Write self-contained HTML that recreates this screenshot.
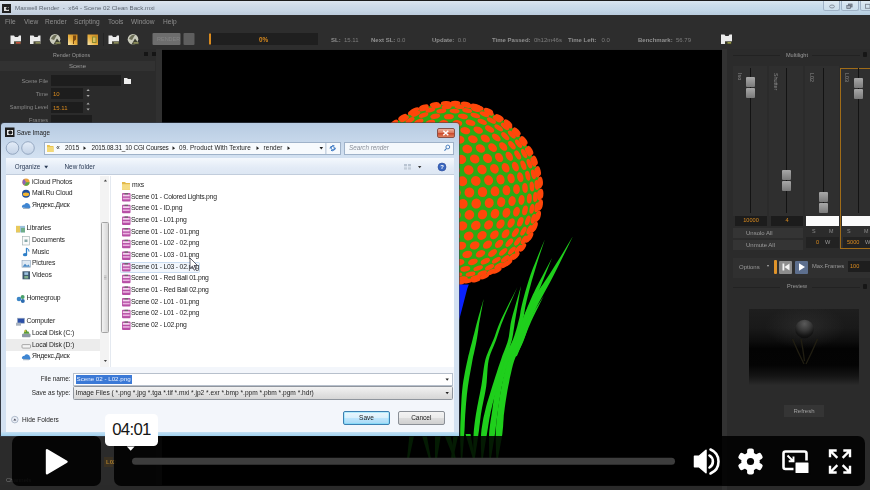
<!DOCTYPE html>
<html lang="en"><head><meta charset="utf-8"><title>Maxwell Render - Save Image</title>
<style>
html,body{margin:0;padding:0;background:#2b2b2b;}
body{width:870px;height:490px;position:relative;overflow:hidden;font-family:"Liberation Sans",sans-serif;font-size:6.5px;color:#9a9a9a;line-height:1;}
div,span{position:absolute;box-sizing:border-box;white-space:nowrap;}
svg{position:absolute;left:0;top:0;overflow:visible}
#frame{left:0;top:0;width:870px;height:490px;overflow:hidden;filter:blur(.45px)}
/* ---------- maxwell app ---------- */
#titlebar{left:0;top:0;width:870px;height:14.6px;background:linear-gradient(rgba(255,255,255,.35) 0,rgba(255,255,255,.12) 30%,rgba(255,255,255,0) 60%,rgba(90,110,140,.12) 100%),linear-gradient(90deg,#cdd8e5 0,#c9d8e7 45%,#c2d9ea 100%);border-top:1.4px solid #1b1b1b;}
#titlebar .t{left:15px;top:4.3px;font-size:6.2px;color:#5d6570;letter-spacing:0}
#menubar{left:0;top:15px;width:870px;height:15px;background:#2d2d2d;}
#menubar span{top:4px;color:#8f8f8f;font-size:6.6px}
#toolbar{left:0;top:30px;width:870px;height:19px;background:#2d2d2d;}
.stat{top:7px;font-size:6px;color:#7d7d7d}
.stat b{color:#8f8f8f;font-weight:bold}
#leftp{left:0;top:49px;width:162px;height:441px;background:#2b2b2b;}
#viewport{left:162px;top:49.6px;width:559.6px;height:441px;background:#000;}
#rightp{left:722px;top:49px;width:148px;height:441px;background:#2b2b2b;}
.lbl{color:#8a8a8a;font-size:5.6px;text-align:right}
.inp{background:#1d1d1d;height:11px}
.or{color:#d98a1e}
.kn{width:9px;height:10px;background:linear-gradient(#a8a8a8,#7a7a7a);border-radius:1px}
.rl{font-size:5.4px;color:#8a8a8a;transform-origin:0 0;transform:rotate(90deg)}
.ar{font-style:normal;font-size:5px;position:relative;top:-.5px}
.hd{font-size:5.6px;color:#9a9a9a;text-align:center}
/* ---------- dialog ---------- */
#dlg{left:1px;top:123px;width:458px;height:313px;background:linear-gradient(#b7cbe2 0,#c6d7ea 18px,#d3e1f1 34px,#d3e1f1 100%);border-radius:3px 3px 0 0;box-shadow:0 0 0 1px rgba(60,70,85,.55);color:#1e1e1e;font-size:6.6px}
#dlg .in{left:5px;top:34px;width:448px;height:275px;background:#fff}
.nav span,.files span{font-size:6.6px;color:#222}
.ico{width:8px;height:8px}
/* ---------- player ---------- */
#play{left:12.2px;top:435.8px;width:88.8px;height:50.4px;border-radius:7px;background:rgba(0,0,0,.87)}
#bar{left:113.6px;top:435.8px;width:751px;height:50.4px;border-radius:7px;background:rgba(0,0,0,.87)}
#tip{left:105.3px;top:414.2px;width:53px;height:31.4px;border-radius:4.5px;background:#fff;color:#161616;font-size:16.8px;text-align:center;line-height:31px;letter-spacing:-.7px;text-indent:-.7px}
</style></head><body>
<div id="frame">
<!-- app chrome -->
<div id="titlebar"><svg width="14" height="14" viewBox="0 0 14 14"><rect x="2" y="3" width="9" height="9" fill="#222"/><path d="M4 6h5v4h-5z" fill="#ddd"/><circle cx="7.5" cy="7.5" r="1.6" fill="#222"/></svg><span class="t">Maxwell Render&nbsp; -&nbsp; x64 - Scene 02 Clean Back.mxi</span>
<span style="left:823.400px;top:0;width:16.500px;height:10.200px;border:1px solid #9fb2c6;border-top:0;border-radius:0 0 2.500px 2.500px;background:rgba(255,255,255,.18)"></span>
<span style="left:840.600px;top:0;width:18.200px;height:10.200px;border:1px solid #9fb2c6;border-top:0;border-radius:0 0 2.500px 2.500px;background:rgba(255,255,255,.18)"></span>
<span style="left:859.600px;top:0;width:16px;height:10.200px;border:1px solid #9fb2c6;border-top:0;border-radius:0 0 2.500px 2.500px;background:rgba(255,255,255,.18)"></span>
<svg width="870" height="15"><ellipse cx="832" cy="5.500" rx="2.400" ry="1.500" fill="none" stroke="#7d8794" stroke-width=".9"/><rect x="848.500" y="3" width="3.600" height="3" fill="#8a929c" stroke="#606a78" stroke-width=".7"/><rect x="846.800" y="4.600" width="3.600" height="3" fill="#aab4c0" stroke="#606a78" stroke-width=".7"/><rect x="865.500" y="3.300" width="4.500" height="4" fill="none" stroke="#7d8794" stroke-width=".9"/></svg>
</div>
<div id="menubar"><span style="left:5px">File</span><span style="left:24px">View</span><span style="left:45px">Render</span><span style="left:74px">Scripting</span><span style="left:108px">Tools</span><span style="left:131px">Window</span><span style="left:163px">Help</span></div>
<div id="toolbar">
<svg width="870" height="19">
<g id="ticons"><defs><linearGradient id="og" x1="0" y1="0" x2="1" y2="1"><stop offset="0" stop-color="#c8821c"/><stop offset=".55" stop-color="#e8b040"/><stop offset="1" stop-color="#f4dc98"/></linearGradient><linearGradient id="og2" x1="1" y1="0" x2="0" y2="1"><stop offset="0" stop-color="#c8821c"/><stop offset=".55" stop-color="#e8b040"/><stop offset="1" stop-color="#f6e6b0"/></linearGradient></defs><path d="M10.5 5.500h3.500l1 1.500h3l1 -1.500h2v8.500h-10.500z" fill="#ececec"/><rect x="14.0" y="11.300" width="7" height="2.900" fill="#4a4a3a"/><rect x="16.0" y="12" width="4.500" height="1.600" fill="#c5503a"/><path d="M30 5.500h3.500l1 1.500h3l1 -1.500h2v8.500h-10.500z" fill="#ececec"/><rect x="33.5" y="11.300" width="7" height="2.900" fill="#4a4a3a"/><rect x="35.5" y="12" width="4.500" height="1.600" fill="#8a8c5a"/><circle cx="55.0" cy="9.300" r="5.300" fill="#c9cabb"/><path d="M51.0 9a5 5 0 0 1 6 -4l-3 5z" fill="#6e7058"/><path d="M53.5 14.500l3.500 -6l4.500 6z" fill="#3d3f30"/><rect x="55.5" y="12" width="5" height="1.800" fill="#8a8c5a"/><rect x="68" y="4.500" width="9.500" height="10.500" fill="url(#og2)"/><path d="M73 5.500h3v4l-2 1.500v3h-1z" fill="#7a4a10"/><rect x="87.500" y="4.500" width="10.500" height="10.500" fill="url(#og2)"/><path d="M92 6.500h4.500v6.500h-4.500z" fill="#8a8a30"/><path d="M93 7.500h2.500v4.500h-2.500z" fill="#d8c060"/><path d="M108.5 5.500h3.500l1 1.500h3l1 -1.500h2v8.500h-10.500z" fill="#ececec"/><rect x="112.0" y="11.300" width="7" height="2.900" fill="#4a4a3a"/><rect x="114.0" y="12" width="4.500" height="1.600" fill="#8a8c5a"/><circle cx="133.0" cy="9.300" r="5.300" fill="#c9cabb"/><path d="M129.0 9a5 5 0 0 1 6 -4l-3 5z" fill="#6e7058"/><path d="M131.5 14.500l3.500 -6l4.500 6z" fill="#3d3f30"/><rect x="133.5" y="12" width="5" height="1.800" fill="#8a8c5a"/></g>
<rect x="103" y="3" width=".7" height="13" fill="#222"/>
<rect x="152.500" y="3" width="28" height="12" rx="1" fill="#6d6d6d"/>
<rect x="183.500" y="3" width="11" height="12" rx="1" fill="#5e5e5e"/>
<rect x="209" y="3" width="109" height="12" fill="#1f1f1f"/>
<rect x="209" y="3.500" width="2" height="11" fill="#d98a1e"/>
<path d="M721 4.500h3.500l1 1.500h3l1 -1.500h2.500v9.500h-11z" fill="#ececec"/><rect x="725" y="11.300" width="7" height="2.900" fill="#3a3a2a"/><rect x="727.5" y="12" width="3.500" height="1.600" fill="#9a9c4a"/>
</svg>
<span style="left:157px;top:7px;font-size:5.5px;color:#858585">RENDER</span>
<span style="left:209px;top:7px;width:109px;text-align:center;font-size:6.4px;color:#d98a1e;font-weight:bold">0%</span>
<span class="stat" style="left:331px"><b>SL:</b>&nbsp; 15.11</span>
<span class="stat" style="left:371px"><b>Next SL:</b> 0.0</span>
<span class="stat" style="left:432px"><b>Update:</b>&nbsp; 0.0</span>
<span class="stat" style="left:492px"><b>Time Passed:</b>&nbsp; 0h12m46s</span>
<span class="stat" style="left:568px"><b>Time Left:</b>&nbsp;&nbsp; 0.0</span>
<span class="stat" style="left:638px"><b>Benchmark:</b>&nbsp; 56.79</span>
</div>
<!-- left panel -->
<div id="leftp">
<span class="hd" style="left:0;top:4px;width:143px;font-size:5.3px">Render Options</span>
<span style="left:144px;top:3px;width:4px;height:4px;background:#151515"></span><span style="left:152px;top:3px;width:4px;height:4px;background:#151515"></span>
<span style="left:0;top:11.500px;width:155px;height:10.500px;background:#323232"></span><span style="left:155.500px;top:0;width:6px;height:441px;background:#303030"></span>
<span class="hd" style="left:0;top:14px;width:155px;font-size:6px">Scene</span>
<span class="lbl" style="left:0;top:29.700px;width:48px">Scene File</span><span class="inp" style="left:51px;top:26px;width:70px"></span>
<svg width="161" height="80"><path d="M124 29h3l1 1h3v5h-7z" fill="#eee"/><path d="M86.500 42l1.600 -2 1.600 2zM86.500 46l1.600 2 1.600 -2zM86.500 55.500l1.600 -2 1.600 2zM86.500 59.500l1.600 2 1.600 -2z" fill="#aaa"/></svg>
<span class="lbl" style="left:0;top:42.800px;width:48px">Time</span><span class="inp" style="left:51px;top:39px;width:32px"></span><span class="or" style="left:53px;top:42px;font-size:6px">10</span>
<span class="lbl" style="left:0;top:56.300px;width:48px">Sampling Level</span><span class="inp" style="left:51px;top:52.500px;width:32px"></span><span class="or" style="left:53px;top:55.500px;font-size:6px">15.11</span>
<span class="lbl" style="left:0;top:68.800px;width:48px">Frames</span><span class="inp" style="left:51px;top:66px;width:41px"></span>
<!-- bits visible under the player -->
<span style="left:6px;top:428px;font-size:6px;color:#777">Channels</span>
<span style="left:104px;top:408px;width:9px;height:10px;background:#3a3122"></span><span style="left:106px;top:410px;font-size:6px;font-weight:bold;color:#a87a2a">L02</span>
</div>
<!-- viewport -->
<div id="viewport"></div><div style="left:0;top:484.500px;width:870px;height:6px;background:#2a2a2a"></div>
<svg id="scene" width="870" height="490" viewBox="0 0 870 490">
<circle cx="451" cy="193" r="89.5" fill="#2caa14"/>
<g fill="#ff470a"><ellipse cx="540.6" cy="204.1" rx="2.3" ry="5.0" transform="rotate(7 540.6 204.1)"/><ellipse cx="475.6" cy="106.2" rx="2.3" ry="5.0" transform="rotate(-74 475.6 106.2)"/><ellipse cx="414.7" cy="110.4" rx="2.3" ry="5.0" transform="rotate(-114 414.7 110.4)"/><ellipse cx="508.2" cy="262.8" rx="2.3" ry="5.0" transform="rotate(51 508.2 262.8)"/><ellipse cx="530.1" cy="236.6" rx="2.3" ry="5.0" transform="rotate(29 530.1 236.6)"/><ellipse cx="534.9" cy="226.4" rx="2.3" ry="5.0" transform="rotate(22 534.9 226.4)"/><ellipse cx="538.4" cy="215.6" rx="2.3" ry="5.0" transform="rotate(14 538.4 215.6)"/><ellipse cx="540.6" cy="181.6" rx="2.3" ry="5.0" transform="rotate(-7 540.6 181.6)"/><ellipse cx="508.1" cy="123.0" rx="2.3" ry="5.0" transform="rotate(-51 508.1 123.0)"/><ellipse cx="488.5" cy="110.9" rx="2.3" ry="5.0" transform="rotate(-65 488.5 110.9)"/><ellipse cx="393.8" cy="123.2" rx="2.3" ry="5.0" transform="rotate(-129 393.8 123.2)"/><ellipse cx="475.8" cy="279.8" rx="2.3" ry="5.0" transform="rotate(74 475.8 279.8)"/><ellipse cx="465.7" cy="103.9" rx="2.3" ry="5.0" transform="rotate(-81 465.7 103.9)"/><ellipse cx="459.4" cy="282.8" rx="2.3" ry="5.0" transform="rotate(85 459.4 282.8)"/><ellipse cx="423.8" cy="107.0" rx="2.3" ry="5.0" transform="rotate(-108 423.8 107.0)"/><ellipse cx="515.7" cy="255.8" rx="2.3" ry="5.0" transform="rotate(44 515.7 255.8)"/><ellipse cx="497.2" cy="270.4" rx="2.3" ry="5.0" transform="rotate(59 497.2 270.4)"/><ellipse cx="538.4" cy="171.0" rx="2.3" ry="5.0" transform="rotate(-14 538.4 171.0)"/><ellipse cx="541.1" cy="193.7" rx="2.3" ry="5.0" transform="rotate(0 541.1 193.7)"/><ellipse cx="516.8" cy="131.4" rx="2.3" ry="5.0" transform="rotate(-43 516.8 131.4)"/><ellipse cx="434.7" cy="104.4" rx="2.3" ry="5.0" transform="rotate(-100 434.7 104.4)"/><ellipse cx="534.9" cy="160.4" rx="2.3" ry="5.0" transform="rotate(-21 534.9 160.4)"/><ellipse cx="524.0" cy="140.4" rx="2.3" ry="5.0" transform="rotate(-36 524.0 140.4)"/><ellipse cx="455.5" cy="103.1" rx="2.3" ry="5.0" transform="rotate(-87 455.5 103.1)"/><ellipse cx="522.6" cy="247.5" rx="2.3" ry="5.0" transform="rotate(37 522.6 247.5)"/><ellipse cx="402.6" cy="117.3" rx="2.3" ry="5.0" transform="rotate(-123 402.6 117.3)"/><ellipse cx="530.1" cy="150.3" rx="2.3" ry="5.0" transform="rotate(-28 530.1 150.3)"/><ellipse cx="445.8" cy="103.3" rx="2.3" ry="5.0" transform="rotate(-93 445.8 103.3)"/><ellipse cx="484.4" cy="276.4" rx="2.3" ry="5.0" transform="rotate(68 484.4 276.4)"/><ellipse cx="499.4" cy="117.4" rx="2.3" ry="5.0" transform="rotate(-57 499.4 117.4)"/><ellipse cx="478.9" cy="107.7" rx="2.3" ry="5.0" transform="rotate(-72 478.9 107.7)"/><ellipse cx="539.7" cy="205.7" rx="2.3" ry="5.0" transform="rotate(8 539.7 205.7)"/><ellipse cx="505.0" cy="264.5" rx="2.3" ry="5.0" transform="rotate(53 505.0 264.5)"/><ellipse cx="412.6" cy="112.1" rx="2.3" ry="5.0" transform="rotate(-115 412.6 112.1)"/><ellipse cx="528.2" cy="238.3" rx="2.3" ry="5.0" transform="rotate(30 528.2 238.3)"/><ellipse cx="467.1" cy="281.0" rx="2.3" ry="5.0" transform="rotate(80 467.1 281.0)"/><ellipse cx="533.3" cy="228.0" rx="2.3" ry="5.0" transform="rotate(23 533.3 228.0)"/><ellipse cx="537.0" cy="217.2" rx="2.3" ry="5.0" transform="rotate(16 537.0 217.2)"/><ellipse cx="539.7" cy="183.3" rx="2.3" ry="5.0" transform="rotate(-6 539.7 183.3)"/><ellipse cx="508.2" cy="124.7" rx="2.3" ry="5.0" transform="rotate(-50 508.2 124.7)"/><ellipse cx="467.3" cy="105.5" rx="2.3" ry="5.0" transform="rotate(-79 467.3 105.5)"/><ellipse cx="489.0" cy="112.6" rx="2.3" ry="5.0" transform="rotate(-65 489.0 112.6)"/><ellipse cx="393.9" cy="124.9" rx="2.3" ry="5.0" transform="rotate(-130 393.9 124.9)"/><ellipse cx="451.7" cy="104.2" rx="2.3" ry="5.0" transform="rotate(-90 451.7 104.2)"/><ellipse cx="454.6" cy="281.6" rx="2.3" ry="5.0" transform="rotate(88 454.6 281.6)"/><ellipse cx="491.4" cy="271.9" rx="2.3" ry="5.0" transform="rotate(63 491.4 271.9)"/><ellipse cx="424.0" cy="108.6" rx="2.3" ry="5.0" transform="rotate(-108 424.0 108.6)"/><ellipse cx="511.8" cy="257.4" rx="2.3" ry="5.0" transform="rotate(47 511.8 257.4)"/><ellipse cx="537.0" cy="172.7" rx="2.3" ry="5.0" transform="rotate(-13 537.0 172.7)"/><ellipse cx="539.2" cy="195.3" rx="2.3" ry="5.0" transform="rotate(2 539.2 195.3)"/><ellipse cx="436.3" cy="106.0" rx="2.3" ry="5.0" transform="rotate(-100 436.3 106.0)"/><ellipse cx="515.7" cy="133.1" rx="2.3" ry="5.0" transform="rotate(-43 515.7 133.1)"/><ellipse cx="475.3" cy="277.7" rx="2.3" ry="5.0" transform="rotate(74 475.3 277.7)"/><ellipse cx="533.3" cy="162.0" rx="2.3" ry="5.0" transform="rotate(-21 533.3 162.0)"/><ellipse cx="522.6" cy="142.1" rx="2.3" ry="5.0" transform="rotate(-35 522.6 142.1)"/><ellipse cx="518.5" cy="249.1" rx="2.3" ry="5.0" transform="rotate(40 518.5 249.1)"/><ellipse cx="404.4" cy="118.9" rx="2.3" ry="5.0" transform="rotate(-122 404.4 118.9)"/><ellipse cx="528.2" cy="151.9" rx="2.3" ry="5.0" transform="rotate(-28 528.2 151.9)"/><ellipse cx="475.8" cy="109.3" rx="2.3" ry="5.0" transform="rotate(-73 475.8 109.3)"/><ellipse cx="497.2" cy="119.1" rx="2.3" ry="5.0" transform="rotate(-58 497.2 119.1)"/><ellipse cx="498.7" cy="266.0" rx="2.3" ry="5.0" transform="rotate(57 498.7 266.0)"/><ellipse cx="536.8" cy="207.4" rx="2.3" ry="5.0" transform="rotate(10 536.8 207.4)"/><ellipse cx="524.1" cy="239.9" rx="2.3" ry="5.0" transform="rotate(33 524.1 239.9)"/><ellipse cx="415.7" cy="113.8" rx="2.3" ry="5.0" transform="rotate(-114 415.7 113.8)"/><ellipse cx="459.4" cy="106.7" rx="2.3" ry="5.0" transform="rotate(-84 459.4 106.7)"/><ellipse cx="529.4" cy="229.7" rx="2.3" ry="5.0" transform="rotate(25 529.4 229.7)"/><ellipse cx="533.4" cy="218.9" rx="2.3" ry="5.0" transform="rotate(17 533.4 218.9)"/><ellipse cx="462.9" cy="278.6" rx="2.3" ry="5.0" transform="rotate(82 462.9 278.6)"/><ellipse cx="536.8" cy="184.9" rx="2.3" ry="5.0" transform="rotate(-5 536.8 184.9)"/><ellipse cx="446.6" cy="107.0" rx="2.3" ry="5.0" transform="rotate(-93 446.6 107.0)"/><ellipse cx="482.2" cy="273.2" rx="2.3" ry="5.0" transform="rotate(69 482.2 273.2)"/><ellipse cx="505.0" cy="126.4" rx="2.3" ry="5.0" transform="rotate(-51 505.0 126.4)"/><ellipse cx="484.4" cy="114.2" rx="2.3" ry="5.0" transform="rotate(-67 484.4 114.2)"/><ellipse cx="430.3" cy="110.0" rx="2.3" ry="5.0" transform="rotate(-104 430.3 110.0)"/><ellipse cx="397.4" cy="126.5" rx="2.3" ry="5.0" transform="rotate(-129 397.4 126.5)"/><ellipse cx="505.2" cy="258.9" rx="2.3" ry="5.0" transform="rotate(51 505.2 258.9)"/><ellipse cx="533.4" cy="174.3" rx="2.3" ry="5.0" transform="rotate(-13 533.4 174.3)"/><ellipse cx="535.3" cy="197.0" rx="2.3" ry="5.0" transform="rotate(3 535.3 197.0)"/><ellipse cx="511.8" cy="134.7" rx="2.3" ry="5.0" transform="rotate(-44 511.8 134.7)"/><ellipse cx="467.1" cy="110.5" rx="2.3" ry="5.0" transform="rotate(-79 467.1 110.5)"/><ellipse cx="511.9" cy="250.6" rx="2.3" ry="5.0" transform="rotate(43 511.9 250.6)"/><ellipse cx="529.4" cy="163.7" rx="2.3" ry="5.0" transform="rotate(-21 529.4 163.7)"/><ellipse cx="489.6" cy="267.3" rx="2.3" ry="5.0" transform="rotate(63 489.6 267.3)"/><ellipse cx="518.5" cy="143.7" rx="2.3" ry="5.0" transform="rotate(-36 518.5 143.7)"/><ellipse cx="470.5" cy="274.1" rx="2.3" ry="5.0" transform="rotate(76 470.5 274.1)"/><ellipse cx="410.0" cy="120.4" rx="2.3" ry="5.0" transform="rotate(-119 410.0 120.4)"/><ellipse cx="524.1" cy="153.5" rx="2.3" ry="5.0" transform="rotate(-28 524.1 153.5)"/><ellipse cx="491.4" cy="120.6" rx="2.3" ry="5.0" transform="rotate(-61 491.4 120.6)"/><ellipse cx="441.3" cy="111.0" rx="2.3" ry="5.0" transform="rotate(-97 441.3 111.0)"/><ellipse cx="423.6" cy="115.2" rx="2.3" ry="5.0" transform="rotate(-109 423.6 115.2)"/><ellipse cx="531.9" cy="208.9" rx="2.3" ry="5.0" transform="rotate(11 531.9 208.9)"/><ellipse cx="517.7" cy="241.4" rx="2.3" ry="5.0" transform="rotate(36 517.7 241.4)"/><ellipse cx="454.6" cy="111.1" rx="2.3" ry="5.0" transform="rotate(-87 454.6 111.1)"/><ellipse cx="523.4" cy="231.2" rx="2.3" ry="5.0" transform="rotate(28 523.4 231.2)"/><ellipse cx="457.3" cy="274.5" rx="2.3" ry="5.0" transform="rotate(86 457.3 274.5)"/><ellipse cx="527.8" cy="220.4" rx="2.3" ry="5.0" transform="rotate(20 527.8 220.4)"/><ellipse cx="475.3" cy="115.5" rx="2.3" ry="5.0" transform="rotate(-73 475.3 115.5)"/><ellipse cx="531.9" cy="186.5" rx="2.3" ry="5.0" transform="rotate(-5 531.9 186.5)"/><ellipse cx="496.3" cy="260.2" rx="2.3" ry="5.0" transform="rotate(56 496.3 260.2)"/><ellipse cx="498.7" cy="127.9" rx="2.3" ry="5.0" transform="rotate(-54 498.7 127.9)"/><ellipse cx="403.9" cy="128.0" rx="2.3" ry="5.0" transform="rotate(-126 403.9 128.0)"/><ellipse cx="478.2" cy="268.2" rx="2.3" ry="5.0" transform="rotate(70 478.2 268.2)"/><ellipse cx="527.8" cy="175.8" rx="2.4" ry="5.0" transform="rotate(-13 527.8 175.8)"/><ellipse cx="503.2" cy="251.9" rx="2.4" ry="5.0" transform="rotate(48 503.2 251.9)"/><ellipse cx="505.2" cy="136.2" rx="2.5" ry="5.0" transform="rotate(-46 505.2 136.2)"/><ellipse cx="529.3" cy="198.5" rx="2.5" ry="5.0" transform="rotate(4 529.3 198.5)"/><ellipse cx="435.2" cy="116.2" rx="2.5" ry="5.0" transform="rotate(-102 435.2 116.2)"/><ellipse cx="418.8" cy="121.7" rx="2.5" ry="5.0" transform="rotate(-114 418.8 121.7)"/><ellipse cx="482.2" cy="121.8" rx="2.5" ry="5.0" transform="rotate(-66 482.2 121.8)"/><ellipse cx="462.9" cy="116.4" rx="2.6" ry="5.0" transform="rotate(-81 462.9 116.4)"/><ellipse cx="523.4" cy="165.2" rx="2.6" ry="5.0" transform="rotate(-21 523.4 165.2)"/><ellipse cx="511.9" cy="145.2" rx="2.6" ry="5.0" transform="rotate(-38 511.9 145.2)"/><ellipse cx="465.3" cy="268.9" rx="2.6" ry="5.0" transform="rotate(79 465.3 268.9)"/><ellipse cx="517.7" cy="155.0" rx="2.6" ry="5.0" transform="rotate(-30 517.7 155.0)"/><ellipse cx="509.3" cy="242.7" rx="2.6" ry="5.0" transform="rotate(40 509.3 242.7)"/><ellipse cx="448.9" cy="116.6" rx="2.7" ry="5.0" transform="rotate(-92 448.9 116.6)"/><ellipse cx="485.3" cy="261.2" rx="2.7" ry="5.0" transform="rotate(63 485.3 261.2)"/><ellipse cx="525.0" cy="210.4" rx="2.7" ry="5.0" transform="rotate(13 525.0 210.4)"/><ellipse cx="515.4" cy="232.6" rx="2.7" ry="5.0" transform="rotate(32 515.4 232.6)"/><ellipse cx="520.3" cy="221.8" rx="2.8" ry="5.0" transform="rotate(23 520.3 221.8)"/><ellipse cx="489.6" cy="129.1" rx="2.8" ry="5.0" transform="rotate(-59 489.6 129.1)"/><ellipse cx="525.0" cy="187.9" rx="2.8" ry="5.0" transform="rotate(-4 525.0 187.9)"/><ellipse cx="413.2" cy="129.2" rx="2.9" ry="5.0" transform="rotate(-121 413.2 129.2)"/><ellipse cx="430.3" cy="122.7" rx="2.9" ry="5.0" transform="rotate(-106 430.3 122.7)"/><ellipse cx="492.6" cy="253.0" rx="2.9" ry="5.0" transform="rotate(55 492.6 253.0)"/><ellipse cx="470.5" cy="122.7" rx="2.9" ry="5.0" transform="rotate(-74 470.5 122.7)"/><ellipse cx="472.9" cy="261.9" rx="3.0" ry="5.0" transform="rotate(72 472.9 261.9)"/><ellipse cx="496.3" cy="137.5" rx="3.0" ry="5.0" transform="rotate(-51 496.3 137.5)"/><ellipse cx="520.3" cy="177.2" rx="3.1" ry="5.0" transform="rotate(-13 520.3 177.2)"/><ellipse cx="521.5" cy="199.9" rx="3.1" ry="5.0" transform="rotate(6 521.5 199.9)"/><ellipse cx="443.5" cy="123.2" rx="3.1" ry="5.0" transform="rotate(-96 443.5 123.2)"/><ellipse cx="457.3" cy="123.2" rx="3.2" ry="5.0" transform="rotate(-85 457.3 123.2)"/><ellipse cx="499.1" cy="243.8" rx="3.2" ry="5.0" transform="rotate(47 499.1 243.8)"/><ellipse cx="503.2" cy="146.5" rx="3.2" ry="5.0" transform="rotate(-42 503.2 146.5)"/><ellipse cx="459.5" cy="262.3" rx="3.2" ry="5.0" transform="rotate(83 459.5 262.3)"/><ellipse cx="515.4" cy="166.6" rx="3.2" ry="5.0" transform="rotate(-22 515.4 166.6)"/><ellipse cx="509.3" cy="156.3" rx="3.2" ry="5.0" transform="rotate(-32 509.3 156.3)"/><ellipse cx="478.2" cy="130.1" rx="3.3" ry="5.0" transform="rotate(-67 478.2 130.1)"/><ellipse cx="505.6" cy="233.8" rx="3.3" ry="5.0" transform="rotate(37 505.6 233.8)"/><ellipse cx="516.5" cy="211.7" rx="3.3" ry="5.0" transform="rotate(16 516.5 211.7)"/><ellipse cx="480.5" cy="253.8" rx="3.3" ry="5.0" transform="rotate(64 480.5 253.8)"/><ellipse cx="511.1" cy="223.0" rx="3.3" ry="5.0" transform="rotate(27 511.1 223.0)"/><ellipse cx="516.5" cy="189.2" rx="3.4" ry="5.0" transform="rotate(-3 516.5 189.2)"/><ellipse cx="485.3" cy="138.5" rx="3.5" ry="5.0" transform="rotate(-58 485.3 138.5)"/><ellipse cx="465.3" cy="130.7" rx="3.5" ry="5.0" transform="rotate(-77 465.3 130.7)"/><ellipse cx="467.3" cy="254.4" rx="3.6" ry="5.0" transform="rotate(75 467.3 254.4)"/><ellipse cx="487.5" cy="244.7" rx="3.6" ry="5.0" transform="rotate(55 487.5 244.7)"/><ellipse cx="511.1" cy="178.4" rx="3.6" ry="5.0" transform="rotate(-14 511.1 178.4)"/><ellipse cx="453.5" cy="254.6" rx="3.7" ry="5.0" transform="rotate(88 453.5 254.6)"/><ellipse cx="512.1" cy="201.1" rx="3.7" ry="5.0" transform="rotate(8 512.1 201.1)"/><ellipse cx="492.6" cy="147.6" rx="3.7" ry="5.0" transform="rotate(-47 492.6 147.6)"/><ellipse cx="494.4" cy="234.8" rx="3.7" ry="5.0" transform="rotate(44 494.4 234.8)"/><ellipse cx="505.6" cy="167.8" rx="3.7" ry="5.0" transform="rotate(-25 505.6 167.8)"/><ellipse cx="499.1" cy="157.5" rx="3.7" ry="5.0" transform="rotate(-36 499.1 157.5)"/><ellipse cx="506.4" cy="212.8" rx="3.8" ry="5.0" transform="rotate(20 506.4 212.8)"/><ellipse cx="500.5" cy="224.1" rx="3.8" ry="5.0" transform="rotate(32 500.5 224.1)"/><ellipse cx="472.9" cy="139.2" rx="3.8" ry="5.0" transform="rotate(-68 472.9 139.2)"/><ellipse cx="474.7" cy="245.4" rx="3.9" ry="5.0" transform="rotate(66 474.7 245.4)"/><ellipse cx="506.4" cy="190.3" rx="3.9" ry="5.0" transform="rotate(-3 506.4 190.3)"/><ellipse cx="459.5" cy="139.6" rx="4.0" ry="5.0" transform="rotate(-81 459.5 139.6)"/><ellipse cx="461.3" cy="245.7" rx="4.0" ry="5.0" transform="rotate(79 461.3 245.7)"/><ellipse cx="480.5" cy="148.5" rx="4.0" ry="5.0" transform="rotate(-56 480.5 148.5)"/><ellipse cx="482.0" cy="235.5" rx="4.1" ry="5.0" transform="rotate(54 482.0 235.5)"/><ellipse cx="500.5" cy="179.5" rx="4.1" ry="5.0" transform="rotate(-15 500.5 179.5)"/><ellipse cx="501.2" cy="202.1" rx="4.1" ry="5.0" transform="rotate(10 501.2 202.1)"/><ellipse cx="487.5" cy="158.4" rx="4.2" ry="5.0" transform="rotate(-44 487.5 158.4)"/><ellipse cx="494.4" cy="168.8" rx="4.2" ry="5.0" transform="rotate(-29 494.4 168.8)"/><ellipse cx="488.6" cy="224.9" rx="4.2" ry="5.0" transform="rotate(40 488.6 224.9)"/><ellipse cx="495.0" cy="213.7" rx="4.2" ry="5.0" transform="rotate(25 495.0 213.7)"/><ellipse cx="467.3" cy="149.0" rx="4.3" ry="5.0" transform="rotate(-70 467.3 149.0)"/><ellipse cx="468.7" cy="236.0" rx="4.3" ry="5.0" transform="rotate(68 468.7 236.0)"/><ellipse cx="495.0" cy="191.3" rx="4.4" ry="5.0" transform="rotate(-2 495.0 191.3)"/><ellipse cx="453.5" cy="149.2" rx="4.4" ry="5.0" transform="rotate(-87 453.5 149.2)"/><ellipse cx="455.0" cy="236.2" rx="4.4" ry="5.0" transform="rotate(85 455.0 236.2)"/><ellipse cx="474.7" cy="159.0" rx="4.4" ry="5.0" transform="rotate(-55 474.7 159.0)"/><ellipse cx="475.8" cy="225.5" rx="4.5" ry="5.0" transform="rotate(53 475.8 225.5)"/><ellipse cx="488.6" cy="180.3" rx="4.5" ry="5.0" transform="rotate(-19 488.6 180.3)"/><ellipse cx="489.2" cy="203.0" rx="4.5" ry="5.0" transform="rotate(15 489.2 203.0)"/><ellipse cx="482.0" cy="169.5" rx="4.5" ry="5.0" transform="rotate(-37 482.0 169.5)"/><ellipse cx="482.5" cy="214.5" rx="4.5" ry="5.0" transform="rotate(34 482.5 214.5)"/><ellipse cx="461.3" cy="159.4" rx="4.6" ry="5.0" transform="rotate(-73 461.3 159.4)"/><ellipse cx="462.3" cy="225.9" rx="4.6" ry="5.0" transform="rotate(71 462.3 225.9)"/><ellipse cx="482.5" cy="192.0" rx="4.7" ry="5.0" transform="rotate(-2 482.5 192.0)"/><ellipse cx="468.7" cy="170.0" rx="4.7" ry="5.0" transform="rotate(-52 468.7 170.0)"/><ellipse cx="469.4" cy="214.9" rx="4.7" ry="5.0" transform="rotate(50 469.4 214.9)"/><ellipse cx="475.8" cy="180.9" rx="4.8" ry="5.0" transform="rotate(-26 475.8 180.9)"/><ellipse cx="476.2" cy="203.6" rx="4.8" ry="5.0" transform="rotate(23 476.2 203.6)"/><ellipse cx="455.0" cy="170.2" rx="4.8" ry="5.0" transform="rotate(-80 455.0 170.2)"/><ellipse cx="455.8" cy="215.1" rx="4.8" ry="5.0" transform="rotate(78 455.8 215.1)"/><ellipse cx="469.4" cy="192.5" rx="4.9" ry="5.0" transform="rotate(-2 469.4 192.5)"/><ellipse cx="462.3" cy="181.3" rx="4.9" ry="5.0" transform="rotate(-46 462.3 181.3)"/><ellipse cx="462.7" cy="203.9" rx="4.9" ry="5.0" transform="rotate(43 462.7 203.9)"/><ellipse cx="455.8" cy="192.7" rx="5.0" ry="5.0" transform="rotate(-4 455.8 192.7)"/></g>
<path d="M458 284.500h10.800l-1.500 4l-8.300 32h-1z" fill="#0a22ff"/>
<g fill="#1fcf1c">
<path d="M572.9 236.3L570.3 240.5L566.7 246.4L562.5 253.4L558.0 260.7L553.6 267.8L549.7 274.0L546.2 279.3L542.7 284.5L539.3 289.3L536.2 293.9L533.3 298.2L530.8 302.2L528.8 305.6L527.3 308.4L526.1 311.0L525.1 313.4L524.1 315.9L523.0 318.7L521.9 321.9L520.8 325.3L519.8 328.7L518.8 332.1L517.7 335.4L516.6 338.7L515.3 341.8L513.9 344.9L512.3 348.1L510.8 351.5L509.3 355.1L507.9 359.0L506.7 363.1L505.5 367.5L504.5 372.0L503.5 376.5L502.6 381.0L501.8 385.4L501.0 389.7L500.2 393.9L499.5 398.2L498.9 402.4L498.3 406.5L497.7 410.6L497.3 414.6L496.8 418.4L496.4 422.2L496.1 425.9L495.9 429.8L495.7 433.7L495.7 438.2L495.8 443.2L495.9 448.3L496.1 453.0L496.3 457.1L496.4 460.0L497.6 460.0L498.2 457.2L498.9 453.3L499.8 448.6L500.7 443.6L501.6 438.7L502.3 434.3L502.7 430.3L503.1 426.4L503.3 422.7L503.6 419.0L503.8 415.3L504.3 411.4L504.8 407.4L505.4 403.3L506.0 399.2L506.7 395.0L507.4 390.8L508.2 386.6L509.1 382.3L509.9 377.8L510.9 373.4L511.9 369.0L512.9 364.9L514.1 361.0L515.4 357.6L517.0 354.3L518.6 351.2L520.3 348.0L521.9 344.8L523.4 341.3L524.7 337.8L525.9 334.3L526.9 330.8L527.9 327.5L528.9 324.3L530.0 321.3L531.0 318.6L532.0 316.3L533.0 314.1L534.1 311.9L535.5 309.2L537.2 305.8L539.3 301.8L541.7 297.4L544.4 292.5L547.3 287.3L550.3 281.8L553.3 276.0L556.6 269.5L560.3 262.0L564.1 254.3L567.7 247.0L570.7 240.7L572.9 236.3z"/>
<path d="M544.8 239.4L543.2 243.3L540.9 248.7L538.3 255.1L535.5 262.0L532.8 268.6L530.6 274.6L528.8 279.9L527.2 285.2L525.7 290.3L524.4 295.1L523.2 299.6L522.2 303.6L521.4 307.0L520.8 309.8L520.4 312.3L520.1 314.5L519.6 316.9L519.0 319.5L518.2 322.6L517.4 325.8L516.4 329.2L515.4 332.6L514.3 336.0L513.1 339.3L511.7 342.4L510.2 345.5L508.6 348.6L506.9 351.9L505.2 355.4L503.7 359.2L502.3 363.2L500.9 367.5L499.6 372.0L498.4 376.5L497.2 381.0L496.2 385.4L495.3 389.7L494.5 394.0L493.9 398.3L493.3 402.4L492.7 406.6L492.2 410.6L491.6 414.5L491.0 418.3L490.4 422.0L489.9 425.8L489.4 429.7L489.1 433.7L489.0 438.2L489.0 443.2L489.1 448.3L489.2 453.1L489.3 457.1L489.4 460.0L490.6 460.0L491.1 457.2L491.8 453.2L492.6 448.6L493.4 443.6L494.2 438.7L494.9 434.3L495.4 430.4L495.9 426.6L496.4 422.8L496.8 419.1L497.3 415.3L497.8 411.4L498.4 407.4L499.0 403.3L499.6 399.1L500.3 395.0L501.0 390.8L501.8 386.6L502.7 382.3L503.7 377.8L504.8 373.4L505.9 369.0L507.1 364.8L508.3 360.8L509.6 357.2L511.1 353.9L512.6 350.6L514.1 347.4L515.6 344.1L516.9 340.7L518.1 337.3L519.3 333.8L520.3 330.3L521.3 326.9L522.2 323.6L523.0 320.5L523.6 317.7L524.0 315.2L524.3 312.9L524.7 310.5L525.1 307.8L525.8 304.4L526.7 300.4L527.8 296.0L529.0 291.2L530.4 286.1L531.8 280.8L533.4 275.4L535.2 269.4L537.3 262.6L539.5 255.6L541.7 249.0L543.5 243.4L544.8 239.4z"/>
<path d="M552.0 258.0L550.4 261.1L548.0 265.4L545.3 270.5L542.4 275.9L539.7 281.0L537.5 285.3L535.7 288.8L534.2 292.0L532.8 294.8L531.6 297.6L530.4 300.3L529.1 303.2L527.8 306.2L526.6 309.2L525.5 312.1L524.3 315.1L523.2 318.2L522.1 321.3L520.9 324.8L519.6 328.6L518.3 332.5L517.1 336.2L516.2 339.2L515.5 341.5L518.5 342.5L519.4 340.4L520.5 337.3L521.8 333.7L523.2 329.9L524.6 326.1L525.9 322.7L527.1 319.6L528.3 316.6L529.4 313.6L530.5 310.7L531.7 307.8L532.9 304.8L534.1 301.9L535.2 299.2L536.4 296.4L537.6 293.5L539.0 290.3L540.5 286.7L542.3 282.2L544.5 276.8L546.7 271.2L548.9 265.8L550.7 261.2L552.0 258.0z"/>
<path d="M521.0 286.0L519.9 289.8L518.3 295.2L516.5 301.5L514.6 308.2L512.8 314.4L511.5 319.6L510.6 323.8L510.1 327.4L509.7 330.6L509.3 333.6L508.9 336.5L508.2 339.5L507.3 342.7L506.2 345.8L505.0 348.9L503.7 352.2L502.4 355.6L501.1 359.4L499.7 363.4L498.3 367.6L496.9 372.0L495.4 376.5L494.0 381.0L492.6 385.3L491.3 389.5L490.0 393.7L488.7 397.9L487.4 402.1L486.2 406.3L485.2 410.4L484.3 414.3L483.4 418.1L482.7 421.9L482.1 425.7L481.5 429.6L481.1 433.7L480.9 438.2L480.9 443.2L481.0 448.3L481.2 453.1L481.3 457.1L481.4 460.0L482.6 460.0L483.1 457.2L483.7 453.2L484.5 448.6L485.3 443.6L486.1 438.7L486.9 434.3L487.5 430.4L488.1 426.7L488.7 423.0L489.3 419.3L490.0 415.5L490.8 411.6L491.7 407.7L492.7 403.6L493.8 399.4L495.0 395.2L496.2 391.0L497.4 386.7L498.6 382.3L499.8 377.9L501.1 373.3L502.4 368.9L503.7 364.6L504.9 360.6L506.2 357.0L507.4 353.6L508.6 350.3L509.8 347.1L510.8 343.8L511.8 340.5L512.5 337.2L513.1 334.1L513.5 331.1L514.0 328.0L514.5 324.5L515.1 320.4L516.0 315.1L517.1 308.7L518.3 302.0L519.4 295.5L520.3 289.9L521.0 286.0z"/>
<path d="M517.4 287.0L515.5 290.7L512.9 295.9L509.7 302.0L506.5 308.5L503.5 314.5L501.1 319.6L499.3 323.7L497.9 327.2L496.7 330.4L495.7 333.4L494.7 336.4L493.5 339.5L492.1 342.7L490.7 345.9L489.3 349.1L487.9 352.4L486.5 355.9L485.4 359.6L484.5 363.7L483.8 368.0L483.2 372.5L482.6 377.0L482.0 381.4L481.4 385.6L480.6 389.8L479.8 394.0L478.9 398.2L478.1 402.4L477.3 406.5L476.6 410.6L475.9 414.5L475.3 418.4L474.8 422.1L474.3 425.9L473.9 429.7L473.6 433.8L473.4 438.3L473.3 443.3L473.3 448.3L473.3 453.1L473.4 457.1L473.4 460.0L474.6 460.0L475.0 457.2L475.6 453.2L476.3 448.5L477.1 443.6L477.8 438.7L478.4 434.2L479.0 430.3L479.4 426.5L479.9 422.8L480.3 419.1L480.8 415.3L481.4 411.4L482.1 407.4L483.0 403.3L483.8 399.2L484.7 395.0L485.5 390.7L486.2 386.4L486.7 381.9L487.0 377.4L487.3 372.9L487.6 368.5L488.0 364.3L488.6 360.4L489.5 356.8L490.6 353.4L491.9 350.2L493.3 347.0L494.6 343.8L495.9 340.5L497.0 337.2L498.0 334.2L499.0 331.2L500.1 328.0L501.3 324.5L502.9 320.4L505.0 315.2L507.7 309.0L510.6 302.5L513.4 296.2L515.7 290.8L517.4 287.0z"/>
<path d="M483.7 299.0L483.0 301.3L482.1 304.4L481.0 308.1L479.9 312.1L478.7 316.1L477.7 319.8L476.8 323.1L475.9 326.5L475.1 329.8L474.3 333.0L473.4 336.3L472.6 339.6L471.8 342.8L470.9 345.9L470.1 349.1L469.3 352.4L468.4 355.8L467.6 359.5L466.7 363.5L465.8 367.8L464.9 372.2L464.1 376.7L463.3 381.2L462.7 385.6L462.2 390.0L461.8 394.2L461.5 398.5L461.3 402.7L461.1 406.8L460.9 410.9L460.7 414.8L460.6 418.6L460.4 422.3L460.3 426.1L460.2 429.9L460.2 433.9L460.2 438.4L460.3 443.4L460.5 448.4L460.6 453.1L460.8 457.1L460.9 460.0L462.1 460.0L462.4 457.2L462.7 453.2L463.1 448.5L463.5 443.5L463.9 438.5L464.2 434.1L464.5 430.1L464.7 426.3L464.8 422.5L465.0 418.8L465.2 415.0L465.5 411.1L465.8 407.1L466.1 403.0L466.5 398.9L466.9 394.7L467.4 390.5L467.9 386.4L468.6 382.1L469.3 377.6L470.1 373.2L470.9 368.8L471.7 364.5L472.4 360.5L473.1 356.8L473.9 353.4L474.6 350.2L475.3 347.0L476.0 343.8L476.6 340.4L477.2 337.1L477.7 333.7L478.2 330.4L478.6 327.0L479.1 323.6L479.7 320.2L480.4 316.5L481.1 312.4L481.9 308.4L482.6 304.5L483.3 301.3L483.7 299.0z"/>
<path d="M543.7 296.0L542.1 298.6L539.7 302.3L537.0 306.6L534.2 311.1L531.6 315.6L529.4 319.5L527.7 322.8L526.3 325.9L525.1 328.9L524.0 331.8L523.0 334.6L521.9 337.5L520.6 340.8L519.3 344.3L518.1 347.8L516.9 351.0L515.9 353.7L515.2 355.7L516.8 356.3L517.6 354.4L518.7 351.7L520.0 348.5L521.4 345.1L522.8 341.6L524.1 338.5L525.3 335.5L526.5 332.7L527.6 329.9L528.8 327.0L530.1 323.9L531.6 320.5L533.5 316.6L535.7 312.0L538.1 307.2L540.4 302.6L542.3 298.8L543.7 296.0z"/>
<path d="M409.5 434L414.5 434L409 459L407 459z"/>
<path d="M421.5 434L426.5 434L431 459L429 459z"/>
<path d="M435.0 434L441.0 434L437 459L435 459z"/>
<path d="M444.0 434L450.0 434L456 459L454 459z"/>
<path d="M453.5 434L458.5 434L453 459L451 459z"/>
<path d="M465.5 434L470.5 434L475 459L473 459z"/>
</g>
</svg>
<!-- right panel -->
<div id="rightp">
<span style="left:0;top:0;width:5px;height:441px;background:#323232"></span>
<span style="left:11px;top:5.500px;width:47px;height:1.500px;background:#222"></span><span style="left:90px;top:5.500px;width:48px;height:1.500px;background:#222"></span>
<span class="hd" style="left:11px;top:3.500px;width:128px">Multilight</span>
<span style="left:141px;top:3px;width:4px;height:5px;background:#161616;border-radius:1px"></span>
<!-- slider columns -->
<span style="left:11px;top:17px;width:34px;height:150px;background:#2f2f2f"></span>
<span style="left:47px;top:17px;width:34px;height:150px;background:#2f2f2f"></span>
<span style="left:83px;top:17px;width:34px;height:150px;background:#2f2f2f"></span>
<span style="left:118px;top:18.500px;width:40px;height:181px;background:#2f2f2f;border:1px solid #a06c18"></span>
<span style="left:27.500px;top:19px;width:1.500px;height:145px;background:#131313"></span>
<span style="left:63.500px;top:19px;width:1.500px;height:145px;background:#131313"></span>
<span style="left:100.500px;top:19px;width:1.500px;height:145px;background:#131313"></span>
<span style="left:135.500px;top:19px;width:1.500px;height:145px;background:#131313"></span>
<!-- handles -->
<span class="kn" style="left:24px;top:28px"></span><span class="kn" style="left:24px;top:39px"></span>
<span class="kn" style="left:60px;top:121px"></span><span class="kn" style="left:60px;top:132px"></span>
<span class="kn" style="left:96.500px;top:143px"></span><span class="kn" style="left:96.500px;top:154px"></span>
<span class="kn" style="left:131.500px;top:29px"></span><span class="kn" style="left:131.500px;top:40px"></span>
<!-- rotated labels -->
<span class="rl" style="left:20px;top:24px">Iso</span>
<span class="rl" style="left:56px;top:24px">Shutter</span>
<span class="rl" style="left:92px;top:24px">L02</span>
<span class="rl" style="left:127px;top:24px">L03</span>
<!-- value fields -->
<span style="left:13px;top:167px;width:32px;height:10px;background:#1c1c1c"></span><span class="or" style="left:13px;top:169px;width:32px;text-align:center;font-size:5.6px">10000</span>
<span style="left:49px;top:167px;width:32px;height:10px;background:#1c1c1c"></span><span class="or" style="left:49px;top:169px;width:32px;text-align:center;font-size:5.6px">4</span>
<span style="left:84px;top:166.500px;width:33px;height:10.500px;background:#fbfbfb"></span>
<span style="left:120px;top:166.500px;width:30px;height:10.500px;background:#fbfbfb"></span>
<span style="left:11px;top:178.500px;width:70px;height:10.500px;background:#343434"></span><span style="left:24px;top:181.200px;font-size:6px;color:#9c9c9c">Unsolo All</span>
<span style="left:11px;top:190.500px;width:70px;height:10.500px;background:#343434"></span><span style="left:24px;top:193.200px;font-size:6px;color:#9c9c9c">Unmute All</span>
<span style="left:90px;top:179.500px;font-size:5.4px;color:#8a8a8a">S</span><span style="left:107px;top:179.500px;font-size:5.4px;color:#8a8a8a">M</span>
<span style="left:125px;top:179.500px;font-size:5.4px;color:#8a8a8a">S</span><span style="left:142px;top:179.500px;font-size:5.4px;color:#8a8a8a">M</span>
<span style="left:84px;top:188px;width:33px;height:10.500px;background:#222"></span>
<span class="or" style="left:94px;top:191px;font-size:5.6px">0</span><span style="left:103px;top:191px;font-size:5.6px;color:#999">W</span>
<span style="left:121px;top:188px;width:28px;height:10.500px;background:#222"></span>
<span class="or" style="left:125px;top:191px;font-size:5.6px">5000</span><span style="left:143px;top:191px;font-size:5.6px;color:#999">W</span>
<!-- options row -->
<span style="left:11px;top:209px;width:137px;height:20px;background:#303030"></span>
<span style="left:17px;top:215px;font-size:6px;color:#9a9a9a">Options</span>
<span style="left:45px;top:215px;font-size:4px;color:#aaa">&#9662;</span>
<span style="left:52px;top:211px;width:3px;height:14px;background:#e0942a;border-radius:1px"></span>
<span style="left:57px;top:211.500px;width:13px;height:13px;background:#8d8d8d;border-radius:1px"></span>
<span style="left:73px;top:211.500px;width:13px;height:13px;background:#5d6f8e;border-radius:1px"></span>
<svg width="148" height="441"><path d="M60.500 214.500h1.800v7h-1.800zM67.500 214.500v7l-5 -3.500z" fill="#f2f2f2"/><path d="M77 214.200l6 3.800l-6 3.800z" fill="#fff"/></svg>
<span style="left:90px;top:215px;font-size:5.800px;color:#9a9a9a">Max.Frames</span>
<span style="left:126px;top:212px;width:22px;height:11px;background:#1e1e1e"></span><span class="or" style="left:128px;top:215px;font-size:5.6px">100</span>
<!-- preview -->
<span style="left:11px;top:237.500px;width:47px;height:1.500px;background:#222"></span><span style="left:90px;top:237.500px;width:48px;height:1.500px;background:#222"></span>
<span class="hd" style="left:11px;top:235px;width:128px">Preview</span>
<span style="left:141px;top:235px;width:4px;height:5px;background:#161616;border-radius:1px"></span>
<span style="left:26.500px;top:259.500px;width:110px;height:76px;background:linear-gradient(#1e1e1e 0,#191919 25%,#0d0d0d 42%,#030303 52%,#040404 74%,#141414 88%,#2a2a2a 100%)"></span>
<span style="left:26.500px;top:259.500px;width:110px;height:40px;background:radial-gradient(ellipse 40px 22px at 56px 18px,rgba(70,70,70,.35) 0,rgba(40,40,40,0) 100%)"></span>
<svg width="148" height="441"><defs><radialGradient id="sph" cx=".5" cy=".22" r=".8"><stop offset="0" stop-color="#5a5a5a"/><stop offset=".45" stop-color="#383838"/><stop offset=".8" stop-color="#161616"/><stop offset="1" stop-color="#0c0c0c"/></radialGradient></defs>
<path d="M70.500 290q5 12 11.500 25M95.500 290q-5 12 -11.500 25M79 290q2 10 3.500 22" stroke="#211e12" stroke-width="1.300" fill="none"/>
<circle cx="82.500" cy="280" r="9.300" fill="url(#sph)"/></svg>
<span style="left:62px;top:356px;width:40px;height:12px;background:#353535"></span>
<span style="left:62px;top:359px;width:40px;text-align:center;font-size:6px;color:#a0a0a0">Refresh</span>

</div>
<!-- save dialog -->
<div id="dlg">
<svg width="458" height="313"><rect x="4" y="4.500" width="9.500" height="9.500" fill="#1d1d1d"/><path d="M6 7h6v5h-6z" fill="#e8e8e8"/><circle cx="9.300" cy="9.500" r="2" fill="#1d1d1d"/><defs><linearGradient id="nb" x1="0" y1="0" x2="0" y2="1"><stop offset="0" stop-color="#e4edf8"/><stop offset="1" stop-color="#c3d2e6"/></linearGradient></defs><circle cx="11.500" cy="25" r="6.300" fill="url(#nb)" stroke="#8fa2bb" stroke-width=".9"/><circle cx="27" cy="25" r="6.300" fill="url(#nb)" stroke="#8fa2bb" stroke-width=".9"/></svg>
<span style="left:15.800px;top:7.200px;font-size:6.300px;letter-spacing:-.05px;color:#1b1b1b">Save Image</span>
<span style="left:0;top:309px;width:458px;height:4px;background:linear-gradient(#c5e0f4,#9fd0ee)"></span>
<span style="left:436px;top:5px;width:17.500px;height:10px;border-radius:2px;background:linear-gradient(#eeb09a 0,#dc7a5e 45%,#cc4a2c 55%,#e0805e 100%);border:1px solid #8a5046"></span>
<svg width="458" height="30"><path d="M442.300 7.800l5 4.500M447.300 7.800l-5 4.500" stroke="#fff" stroke-width="1.500"/></svg>
<span style="left:43px;top:18.500px;width:297px;height:13px;background:#f7fafd;border:1px solid #9fb2c9"></span>
<svg width="458" height="40"><path d="M46 22h2.500l.8 1h3.200v6h-6.500z" fill="#e9c350"/><path d="M46 24h6.500v5h-6.500z" fill="#f3d978"/><path d="M318.500 24h3.600l-1.800 2.400z" fill="#222"/><rect x="324.500" y="19" width=".8" height="12" fill="#9fb2c9"/><path d="M329 25.500a2.200 2.200 0 1 1 1 1.900M334.500 24.800a2.200 2.200 0 1 1 -1 -1.900" stroke="#3b78c4" stroke-width="1" fill="none"/></svg>
<span style="left:55.3px;top:21.600px;font-size:6.4px;letter-spacing:0px;color:#1a1a1a">&laquo;</span>
<span style="left:64px;top:21.600px;font-size:6.4px;letter-spacing:0px;color:#1a1a1a">2015</span>
<span style="left:90.5px;top:21.600px;font-size:6.4px;letter-spacing:-0.17px;color:#1a1a1a">2015.08.31_10 CGI Courses</span>
<span style="left:178px;top:21.600px;font-size:6.4px;letter-spacing:0.08px;color:#1a1a1a">09. Product With Texture</span>
<span style="left:262.5px;top:21.600px;font-size:6.4px;letter-spacing:0.1px;color:#1a1a1a">render</span>
<svg width="458" height="40"><path d="M82.500 23.300l2.600 1.900l-2.600 1.900zM171.500 23.300l2.600 1.900l-2.600 1.900zM255.500 23.300l2.600 1.900l-2.600 1.900zM286.500 23.300l2.600 1.900l-2.600 1.900z" fill="#222"/></svg>
<span style="left:343px;top:18.500px;width:110px;height:13px;background:#f4f8fc;border:1px solid #9fb2c9"></span>
<span style="left:348px;top:21.500px;font-size:6.300px;color:#8a8f98;font-style:italic">Search render</span>
<svg width="458" height="40"><circle cx="446.800" cy="24" r="1.900" fill="none" stroke="#3f76b7" stroke-width=".9"/><path d="M445.500 25.500l-2 2.200" stroke="#3f76b7" stroke-width="1.100"/></svg>
<span style="left:5px;top:34.500px;width:448px;height:17.500px;background:linear-gradient(#f4f8fd,#e3ebf6 60%,#dde7f3);border-bottom:1px solid #c2cddc"></span>
<span style="left:13.800px;top:41px;font-size:6.300px;color:#2a3a55">Organize</span>
<span style="left:63.500px;top:41px;font-size:6.400px;color:#2a3a55">New folder</span>
<svg width="458" height="60"><rect x="403" y="41" width="3" height="2.300" fill="#b9c4d2"/><rect x="407" y="41" width="3" height="2.300" fill="#b9c4d2"/><rect x="403" y="44.300" width="3" height="2.300" fill="#c3cdd9"/><rect x="407" y="44.300" width="3" height="2.300" fill="#c3cdd9"/><path d="M417 43h3.400l-1.700 2.300z" fill="#333"/><path d="M43.300 42.800h3.800l-1.900 2.600z" fill="#2a3a55"/><circle cx="441" cy="44" r="4" fill="#3a67c0" stroke="#2b4a95" stroke-width=".6"/></svg>
<span style="left:439.300px;top:41px;font-size:6px;color:#fff;font-weight:bold">?</span>
<span style="left:5px;top:52px;width:448px;height:192px;background:#fff"></span>
<span style="left:5px;top:244px;width:448px;height:65px;background:#f3f6fb"></span>
<span style="left:99px;top:53px;width:9px;height:191px;background:#f3f3f3"></span>
<span style="left:100.200px;top:98.800px;width:8.200px;height:111.500px;background:linear-gradient(90deg,#f2f2f2,#d6d6d6);border:1px solid #a3a3a3;border-radius:1.500px"></span>
<svg width="458" height="313"><path d="M102.800 58.500h3.200l-1.600 -2z" fill="#444"/><path d="M102.800 237h3.200l-1.600 2z" fill="#444"/><path d="M103 153h2.500M103 154.500h2.500M103 156h2.500" stroke="#888" stroke-width=".5"/></svg>
<span style="left:5px;top:215.500px;width:94px;height:12px;background:#ececec"></span>
<span style="left:31px;top:55.7px;font-size:6.800px;letter-spacing:-.17px;color:#1e1e1e">iCloud Photos</span>
<span style="left:31px;top:67.2px;font-size:6.800px;letter-spacing:-.17px;color:#1e1e1e">Mail.Ru Cloud</span>
<span style="left:31px;top:78.9px;font-size:6.800px;letter-spacing:-.17px;color:#1e1e1e">Яндекс.Диск</span>
<span style="left:25.5px;top:102.4px;font-size:6.800px;letter-spacing:-.17px;color:#1e1e1e">Libraries</span>
<span style="left:31px;top:114.0px;font-size:6.800px;letter-spacing:-.17px;color:#1e1e1e">Documents</span>
<span style="left:31px;top:125.6px;font-size:6.800px;letter-spacing:-.17px;color:#1e1e1e">Music</span>
<span style="left:31px;top:137.2px;font-size:6.800px;letter-spacing:-.17px;color:#1e1e1e">Pictures</span>
<span style="left:31px;top:148.8px;font-size:6.800px;letter-spacing:-.17px;color:#1e1e1e">Videos</span>
<span style="left:25.5px;top:172.0px;font-size:6.800px;letter-spacing:-.17px;color:#1e1e1e">Homegroup</span>
<span style="left:25.5px;top:195.2px;font-size:6.800px;letter-spacing:-.17px;color:#1e1e1e">Computer</span>
<span style="left:31px;top:206.8px;font-size:6.800px;letter-spacing:-.17px;color:#1e1e1e">Local Disk (C:)</span>
<span style="left:31px;top:218.6px;font-size:6.800px;letter-spacing:-.17px;color:#1e1e1e">Local Disk (D:)</span>
<span style="left:31px;top:230.2px;font-size:6.800px;letter-spacing:-.17px;color:#1e1e1e">Яндекс.Диск</span>
<svg width="458" height="313"><circle cx="25.0" cy="59.2" r="3.600" fill="#e9a23b"/><path d="M25.0 59.2l3.600 0a3.600 3.600 0 0 1 -5.400 3.100z" fill="#5aa64a"/><path d="M25.0 59.2l-1.800 3.100a3.600 3.600 0 0 1 0 -6.200z" fill="#8a62b8"/><circle cx="25.0" cy="70.7" r="4" fill="#1f4f9c"/><ellipse cx="25.0" cy="71.3" rx="3.200" ry="1.900" fill="#f2b530"/><path d="M21.0 84.4a3 2.500 0 0 1 2.500 -3a3 3 0 0 1 5.500 1.500a1.500 1.500 0 0 1 -.5 2.500z" fill="#3f86d2"/><path d="M22.0 84.9h6v1h-6z" fill="#9ab"/><rect x="15.0" y="102.9" width="9" height="6.500" fill="#9cc0dc"/><rect x="15.0" y="102.9" width="4" height="6.500" fill="#e8c95c"/><rect x="20.0" y="104.9" width="4" height="4.500" fill="#6fae8a"/><rect x="21.5" y="113.5" width="7" height="8.500" fill="#fafafa" stroke="#9aa" stroke-width=".6"/><rect x="23.5" y="116.5" width="3" height="2.500" fill="#8aa"/><path d="M25.5 125.10000000000001v6.200" stroke="#2d7fc8" stroke-width="1.300"/><ellipse cx="24.1" cy="131.70000000000002" rx="2.200" ry="1.600" fill="#2d7fc8"/><path d="M25.5 125.10000000000001q3 1 2.500 3.500" stroke="#2d7fc8" stroke-width="1" fill="none"/><rect x="21.0" y="137.7" width="8.500" height="6.500" fill="#dfe9f3" stroke="#8aa0b8" stroke-width=".6"/><path d="M21.5 143.7l2.500 -3l2 2l1.500 -1.200l1.500 2.200z" fill="#4b8ac5"/><rect x="21.5" y="148.29999999999998" width="7.500" height="8" fill="#3c566e"/><rect x="23.3" y="149.29999999999998" width="3.900" height="2.600" fill="#9cc3e0"/><rect x="23.3" y="152.89999999999998" width="3.900" height="2.600" fill="#7fb08a"/><circle cx="18.0" cy="176.0" r="2.300" fill="#3d86c6"/><circle cx="21.6" cy="174.1" r="2" fill="#4aa06a"/><circle cx="21.8" cy="177.9" r="2" fill="#2d6cb0"/><rect x="16.5" y="195.2" width="7" height="5" fill="#2b4fa8" stroke="#9ab" stroke-width=".6"/><rect x="15.0" y="199.7" width="5" height="3" fill="#aab4c0"/><rect x="21.0" y="210.79999999999998" width="8.500" height="3.500" rx=".8" fill="#8d98a6"/><path d="M22.5 210.79999999999998l1.500 -4h1.500l.8 1.600h1.200l1 2.400z" fill="#5a9a3c"/><rect x="23.5" y="207.29999999999998" width="1.500" height="1.500" fill="#e9c130"/><rect x="21.0" y="221.6" width="8.500" height="3.500" rx=".8" fill="#f4f4f4" stroke="#777" stroke-width=".6"/><path d="M21.0 235.7a3 2.500 0 0 1 2.500 -3a3 3 0 0 1 5.500 1.500a1.500 1.500 0 0 1 -.5 2.500z" fill="#3f86d2"/><path d="M22.0 236.2h6v1h-6z" fill="#9ab"/></svg>
<span style="left:108.500px;top:53px;width:1px;height:191px;background:#e4e9f0"></span>
<span style="left:131px;top:58.8px;font-size:6.800px;letter-spacing:-.21px;color:#1e1e1e">mxs</span>
<span style="left:130px;top:70.5px;font-size:6.800px;letter-spacing:-.21px;color:#1e1e1e">Scene 01 - Colored Lights.png</span>
<span style="left:130px;top:82.1px;font-size:6.800px;letter-spacing:-.21px;color:#1e1e1e">Scene 01 - ID.png</span>
<span style="left:130px;top:93.8px;font-size:6.800px;letter-spacing:-.21px;color:#1e1e1e">Scene 01 - L01.png</span>
<span style="left:130px;top:105.5px;font-size:6.800px;letter-spacing:-.21px;color:#1e1e1e">Scene 01 - L02 - 01.png</span>
<span style="left:130px;top:117.2px;font-size:6.800px;letter-spacing:-.21px;color:#1e1e1e">Scene 01 - L02 - 02.png</span>
<span style="left:130px;top:128.8px;font-size:6.800px;letter-spacing:-.21px;color:#1e1e1e">Scene 01 - L03 - 01.png</span>
<span style="left:119px;top:138.6px;width:80px;height:11.300px;background:#f1f6fc;border:1px solid #c9dcf2;border-radius:1.500px"></span>
<span style="left:130px;top:140.5px;font-size:6.800px;letter-spacing:-.21px;color:#1e1e1e">Scene 01 - L03 - 02.png</span>
<span style="left:130px;top:152.2px;font-size:6.800px;letter-spacing:-.21px;color:#1e1e1e">Scene 01 - Red Ball 01.png</span>
<span style="left:130px;top:163.8px;font-size:6.800px;letter-spacing:-.21px;color:#1e1e1e">Scene 01 - Red Ball 02.png</span>
<span style="left:130px;top:175.5px;font-size:6.800px;letter-spacing:-.21px;color:#1e1e1e">Scene 02 - L01 - 01.png</span>
<span style="left:130px;top:187.2px;font-size:6.800px;letter-spacing:-.21px;color:#1e1e1e">Scene 02 - L01 - 02.png</span>
<span style="left:130px;top:198.8px;font-size:6.800px;letter-spacing:-.21px;color:#1e1e1e">Scene 02 - L02.png</span>
<svg width="458" height="313"><path d="M121 58.9h3l1 1h4v7h-8z" fill="#e3b94a"/><path d="M121 61.199999999999996h8v5.700h-8z" fill="#f5dc84"/><rect x="121" y="70.07" width="8.500" height="8.500" rx="1" fill="#b84fa6"/><rect x="121.8" y="71.57" width="6.900" height="1.800" fill="#f3d4ee"/><rect x="121.8" y="74.77" width="6.900" height="1.600" fill="#e9b3e0"/><rect x="123.5" y="70.07" width="3.500" height="1.300" fill="#6a6a6a"/><rect x="121" y="81.74" width="8.500" height="8.500" rx="1" fill="#b84fa6"/><rect x="121.8" y="83.24" width="6.900" height="1.800" fill="#f3d4ee"/><rect x="121.8" y="86.44" width="6.900" height="1.600" fill="#e9b3e0"/><rect x="123.5" y="81.74" width="3.500" height="1.300" fill="#6a6a6a"/><rect x="121" y="93.41" width="8.500" height="8.500" rx="1" fill="#b84fa6"/><rect x="121.8" y="94.91" width="6.900" height="1.800" fill="#f3d4ee"/><rect x="121.8" y="98.11" width="6.900" height="1.600" fill="#e9b3e0"/><rect x="123.5" y="93.41" width="3.500" height="1.300" fill="#6a6a6a"/><rect x="121" y="105.08" width="8.500" height="8.500" rx="1" fill="#b84fa6"/><rect x="121.8" y="106.58" width="6.900" height="1.800" fill="#f3d4ee"/><rect x="121.8" y="109.78" width="6.900" height="1.600" fill="#e9b3e0"/><rect x="123.5" y="105.08" width="3.500" height="1.300" fill="#6a6a6a"/><rect x="121" y="116.75" width="8.500" height="8.500" rx="1" fill="#b84fa6"/><rect x="121.8" y="118.25" width="6.900" height="1.800" fill="#f3d4ee"/><rect x="121.8" y="121.45" width="6.900" height="1.600" fill="#e9b3e0"/><rect x="123.5" y="116.75" width="3.500" height="1.300" fill="#6a6a6a"/><rect x="121" y="128.42" width="8.500" height="8.500" rx="1" fill="#b84fa6"/><rect x="121.8" y="129.92" width="6.900" height="1.800" fill="#f3d4ee"/><rect x="121.8" y="133.11999999999998" width="6.900" height="1.600" fill="#e9b3e0"/><rect x="123.5" y="128.42" width="3.500" height="1.300" fill="#6a6a6a"/><rect x="121" y="140.09" width="8.500" height="8.500" rx="1" fill="#b84fa6"/><rect x="121.8" y="141.59" width="6.900" height="1.800" fill="#f3d4ee"/><rect x="121.8" y="144.79" width="6.900" height="1.600" fill="#e9b3e0"/><rect x="123.5" y="140.09" width="3.500" height="1.300" fill="#6a6a6a"/><rect x="121" y="151.76" width="8.500" height="8.500" rx="1" fill="#b84fa6"/><rect x="121.8" y="153.26" width="6.900" height="1.800" fill="#f3d4ee"/><rect x="121.8" y="156.45999999999998" width="6.900" height="1.600" fill="#e9b3e0"/><rect x="123.5" y="151.76" width="3.500" height="1.300" fill="#6a6a6a"/><rect x="121" y="163.43" width="8.500" height="8.500" rx="1" fill="#b84fa6"/><rect x="121.8" y="164.93" width="6.900" height="1.800" fill="#f3d4ee"/><rect x="121.8" y="168.13" width="6.900" height="1.600" fill="#e9b3e0"/><rect x="123.5" y="163.43" width="3.500" height="1.300" fill="#6a6a6a"/><rect x="121" y="175.1" width="8.500" height="8.500" rx="1" fill="#b84fa6"/><rect x="121.8" y="176.6" width="6.900" height="1.800" fill="#f3d4ee"/><rect x="121.8" y="179.79999999999998" width="6.900" height="1.600" fill="#e9b3e0"/><rect x="123.5" y="175.1" width="3.500" height="1.300" fill="#6a6a6a"/><rect x="121" y="186.77" width="8.500" height="8.500" rx="1" fill="#b84fa6"/><rect x="121.8" y="188.27" width="6.900" height="1.800" fill="#f3d4ee"/><rect x="121.8" y="191.47" width="6.900" height="1.600" fill="#e9b3e0"/><rect x="123.5" y="186.77" width="3.500" height="1.300" fill="#6a6a6a"/><rect x="121" y="198.44" width="8.500" height="8.500" rx="1" fill="#b84fa6"/><rect x="121.8" y="199.94" width="6.900" height="1.800" fill="#f3d4ee"/><rect x="121.8" y="203.14" width="6.900" height="1.600" fill="#e9b3e0"/><rect x="123.5" y="198.44" width="3.500" height="1.300" fill="#6a6a6a"/><path d="M189 135l0 10.500l2.400 -2.300l1.800 4l1.700 -.8l-1.800 -3.900l3.300 -.1z" fill="#fff" stroke="#223" stroke-width=".7"/></svg>
<span style="left:0;top:253px;width:69.500px;text-align:right;font-size:6.400px;color:#1e1e1e">File name:</span>
<span style="left:0;top:266.500px;width:69.500px;text-align:right;font-size:6.400px;color:#1e1e1e">Save as type:</span>
<span style="left:72px;top:249.500px;width:380px;height:13px;background:#fff;border:1px solid #b7c0cc"></span>
<span style="left:74.600px;top:251.500px;width:56px;height:9px;background:#3b79d6"></span>
<span style="left:75.600px;top:253px;font-size:6.200px;color:#e8f0ff">Scene 02 - L02.png</span>
<span style="left:72px;top:263px;width:380px;height:13.500px;background:linear-gradient(#f2f2f2,#e2e2e2 55%,#d6d6d6);border:1px solid #8f959d;border-radius:1.500px"></span>
<span style="left:74.600px;top:266.500px;font-size:6.600px;color:#1e1e1e">Image Files ( *.png *.jpg *.tga *.tif *.mxi *.jp2 *.exr *.bmp *.ppm *.pbm *.pgm *.hdr)</span>
<svg width="458" height="313"><path d="M444.500 255.500h3.400l-1.700 2.300z" fill="#222"/><path d="M444.500 269h3.400l-1.700 2.300z" fill="#222"/><circle cx="13.800" cy="296.600" r="3.300" fill="#e9eef6" stroke="#98a6ba" stroke-width=".7"/><path d="M12.300 297.400l1.500 -1.800l1.500 1.800z" fill="#445"/></svg>
<span style="left:21px;top:293.800px;font-size:6.500px;color:#1e1e1e">Hide Folders</span>
<span style="left:342px;top:288px;width:47px;height:13.500px;border-radius:2px;background:linear-gradient(#eaf6fd 0,#d9f0fc 48%,#bee6fd 52%,#a7d9f5 100%);border:1px solid #3c7fb1;box-shadow:inset 0 0 0 1px #48d8fb55"></span>
<span style="left:342px;top:291.500px;width:47px;text-align:center;font-size:6.500px;color:#1a1a1a">Save</span>
<span style="left:396.500px;top:288px;width:47.500px;height:13.500px;border-radius:2px;background:linear-gradient(#f3f3f3 0,#ebebeb 48%,#dddddd 52%,#cfcfcf 100%);border:1px solid #8a8f96"></span>
<span style="left:396.500px;top:291.500px;width:47.500px;text-align:center;font-size:6.500px;color:#1a1a1a">Cancel</span>
</div>
</div>
<!-- player chrome -->
<div id="play"></div>
<div id="bar"></div>
<div id="tip">04:01</div>
<svg width="870" height="490" viewBox="0 0 870 490">
<path d="M126.800 446.600h7.800l-3.900 4.200z" fill="#fff"/>
<path d="M47 450.200v23l19.500 -11.500z" fill="#fff" stroke="#fff" stroke-width="2.400" stroke-linejoin="round"/>
<rect x="132" y="457.800" width="543" height="7" rx="3.500" fill="#3d3d3d"/>
<!-- volume -->
<g fill="#fff">
<path d="M694.500 456.300h4.500l7 -6v22.400l-7 -6h-4.500z" stroke="#fff" stroke-width="1.500" stroke-linejoin="round"/>
</g>
<path d="M709.500 455.500a7 7 0 0 1 0 12" stroke="#fff" stroke-width="2.600" fill="none" stroke-linecap="round"/>
<path d="M710.500 449.500a13 13 0 0 1 0 24" stroke="#fff" stroke-width="2.600" fill="none" stroke-linecap="round"/>
<!-- gear -->
<g transform="translate(750.500 461.500)" fill="#fff">
<circle r="9.200"/>
<g id="teeth"><rect x="-3.400" y="-13" width="6.800" height="26" rx="2.200"/><rect x="-3.400" y="-13" width="6.800" height="26" rx="2.200" transform="rotate(60)"/><rect x="-3.400" y="-13" width="6.800" height="26" rx="2.200" transform="rotate(120)"/></g>
<circle r="3.600" fill="#050505"/>
</g>
<!-- pip -->
<rect x="783.500" y="451.500" width="23" height="17.500" rx="2" fill="none" stroke="#fff" stroke-width="2.600"/>
<rect x="794.500" y="461.500" width="15" height="12.500" rx="1.500" fill="#fff" stroke="#050505" stroke-width="2"/>
<path d="M787.500 455.500l5.500 5.500M793.500 456.500v4.800h-4.800" stroke="#fff" stroke-width="1.900" fill="none"/>
<!-- fullscreen -->
<g stroke="#fff" stroke-width="2.400" fill="none" stroke-linecap="square">
<path d="M830 456v-5.500h5.500M830.500 451l6 6"/>
<path d="M850 456v-5.500h-5.500M849.500 451l-6 6"/>
<path d="M830 467v5.500h5.500M830.500 472l6 -6"/>
<path d="M850 467v5.500h-5.500M849.500 472l-6 -6"/>
</g>
</svg>

</body></html>
